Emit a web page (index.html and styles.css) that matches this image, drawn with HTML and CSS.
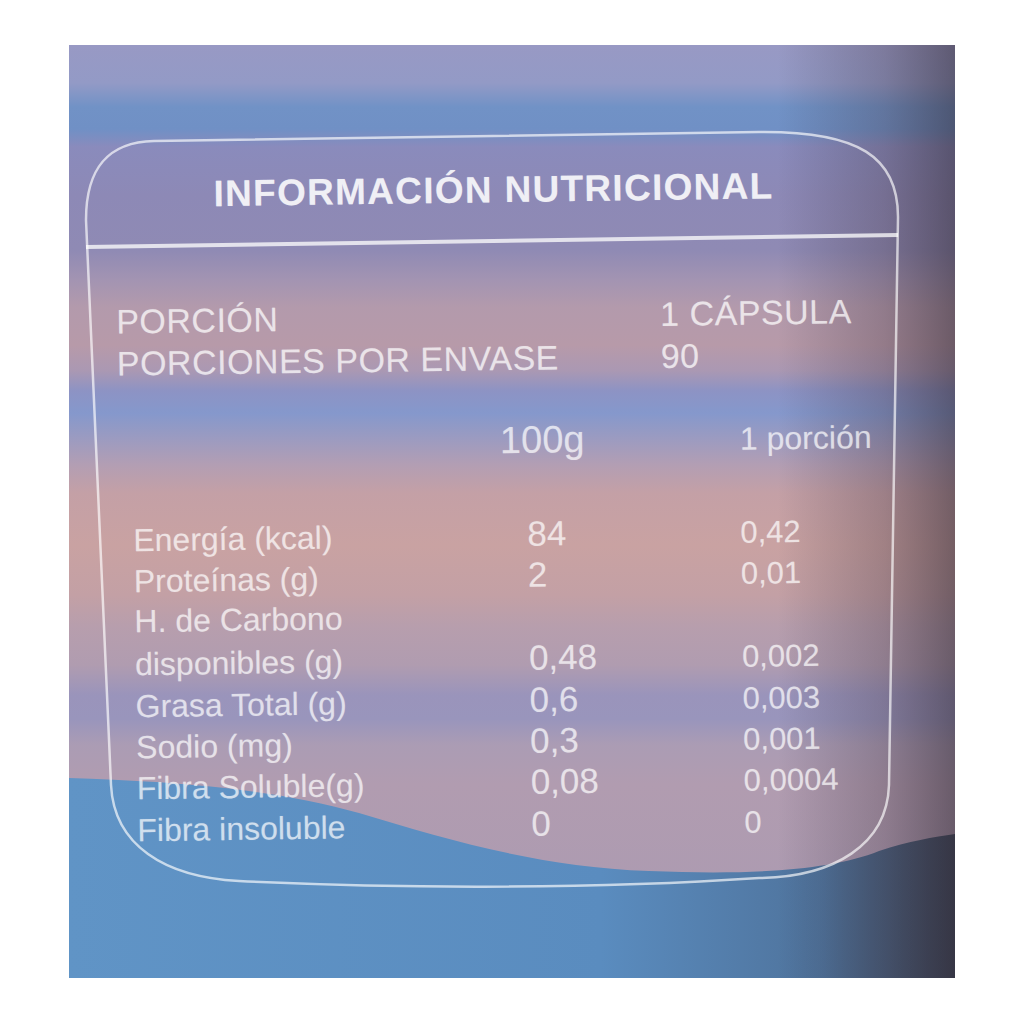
FILE: index.html
```html
<!DOCTYPE html>
<html lang="es">
<head>
<meta charset="utf-8">
<title>Información nutricional</title>
<link rel="stylesheet" href="styles.css">
</head>
<body>
<div class="photo">
  <svg class="backdrop" viewBox="0 0 886 933" width="886" height="933" aria-hidden="true">
    <defs>
      <linearGradient id="wave" x1="0" y1="0" x2="1" y2="0">
        <stop offset="0" stop-color="#6094c6"/>
        <stop offset="0.6" stop-color="#5a8cbf"/>
        <stop offset="0.85" stop-color="#4f739c"/>
        <stop offset="1" stop-color="#3f4a5e"/>
      </linearGradient>
      <linearGradient id="shade" x1="0" y1="0" x2="1" y2="0">
        <stop offset="0" stop-color="#2e2838" stop-opacity="0"/>
        <stop offset="0.8" stop-color="#2e2838" stop-opacity="0"/>
        <stop offset="0.92" stop-color="#3a2c38" stop-opacity="0.28"/>
        <stop offset="1" stop-color="#2f2630" stop-opacity="0.55"/>
      </linearGradient>
    </defs>
    <path d="M0 733 C 90 736, 200 742, 290 768 C 380 795, 470 822, 580 826 C 680 830, 760 826, 810 806 C 840 796, 865 792, 886 789 L 886 933 L 0 933 Z" fill="url(#wave)"/>
    <rect x="0" y="0" width="886" height="933" fill="url(#shade)"/>
    <path class="frame" d="M17 175 C 17 122, 40 97, 85 96 L 690 87 C 790 86, 829 112, 829 172 L 820 740 C 818 800, 765 832, 690 833 C 500 846, 300 842, 170 836 C 95 832, 45 800, 42 740 Z"/>
    <path class="divider" d="M17 202 L 829 190"/>
  </svg>

  <div class="label">
    <h1 class="title">INFORMACIÓN NUTRICIONAL</h1>

    <div class="serving">
      <span>PORCIÓN</span><span>1 CÁPSULA</span>
      <span>PORCIONES POR ENVASE</span><span>90</span>
    </div>

    <div class="heads">
      <span class="head-100">100g</span><span class="head-por">1 porción</span>
    </div>

    <div class="rows">
      <span class="name">Energía (kcal)</span><span class="v100">84</span><span class="vpor">0,42</span>
      <span class="name">Proteínas (g)</span><span class="v100">2</span><span class="vpor">0,01</span>
      <span class="name">H. de Carbono</span><span class="v100"></span><span class="vpor"></span>
      <span class="name">disponibles (g)</span><span class="v100">0,48</span><span class="vpor">0,002</span>
      <span class="name">Grasa Total (g)</span><span class="v100">0,6</span><span class="vpor">0,003</span>
      <span class="name">Sodio (mg)</span><span class="v100">0,3</span><span class="vpor">0,001</span>
      <span class="name">Fibra Soluble(g)</span><span class="v100">0,08</span><span class="vpor">0,0004</span>
      <span class="name">Fibra insoluble</span><span class="v100">0</span><span class="vpor">0</span>
    </div>
  </div>
</div>
</body>
</html>
```

FILE: styles.css
```css
html, body {
  margin: 0;
  padding: 0;
  background: #ffffff;
}

body {
  font-family: "Liberation Sans", Arial, sans-serif;
  padding: 45px 0 0 69px;
  height: 1024px;
  box-sizing: border-box;
}

.photo {
  position: relative;
  width: 886px;
  height: 933px;
  overflow: hidden;
  background: linear-gradient(to bottom,
    #9899c4 0px,
    #939ac6 38px,
    #7192c6 62px,
    #7090c5 84px,
    #8a8bbc 102px,
    #8d89b6 150px,
    #8f8ab4 205px,
    #a394b2 235px,
    #b39aac 262px,
    #b79aa9 300px,
    #aa98b3 326px,
    #8d93c4 346px,
    #8598cc 368px,
    #9c9bc0 394px,
    #b39eb3 420px,
    #c4a0a6 448px,
    #c9a2a2 500px,
    #c3a0a5 550px,
    #b79ead 582px,
    #b09cb0 620px,
    #9a94bb 650px,
    #9995bc 674px,
    #ab9cb4 700px,
    #b19cb0 740px,
    #a99ab2 933px);
}

.backdrop {
  position: absolute;
  left: 0;
  top: 0;
  display: block;
}

.frame {
  fill: none;
  stroke: rgba(255, 255, 255, 0.66);
  stroke-width: 2.5;
}

.divider {
  stroke: rgba(255, 255, 255, 0.75);
  stroke-width: 4;
}

.label {
  position: relative;
  padding-top: 123px;
  transform: rotate(-0.8deg);
  color: rgba(255, 255, 255, 0.6);
  text-shadow: 0 0 1px rgba(255, 255, 255, 0.3);
}

.title {
  margin: 0 0 0 148px;
  font-size: 37px;
  line-height: 44px;
  font-weight: 700;
  letter-spacing: 1.3px;
  color: rgba(255, 255, 255, 0.82);
}

.serving {
  display: grid;
  grid-template-columns: 544px auto;
  margin: 83px 0 0 49px;
  font-size: 34px;
  line-height: 42px;
  letter-spacing: 0.5px;
  color: rgba(255, 255, 255, 0.64);
}

.heads {
  display: grid;
  grid-template-columns: 240px auto;
  align-items: baseline;
  margin: 38px 0 0 431px;
  line-height: 46px;
}

.head-100 {
  font-size: 38px;
}

.head-por {
  font-size: 32px;
}

.rows {
  display: grid;
  grid-template-columns: 394px 213px auto;
  grid-auto-rows: 41.4px;
  align-items: baseline;
  margin: 48px 0 0 63px;
  line-height: 41.4px;
}

.name {
  font-size: 32px;
}

.v100 {
  font-size: 35px;
}

.vpor {
  font-size: 31px;
}
```
